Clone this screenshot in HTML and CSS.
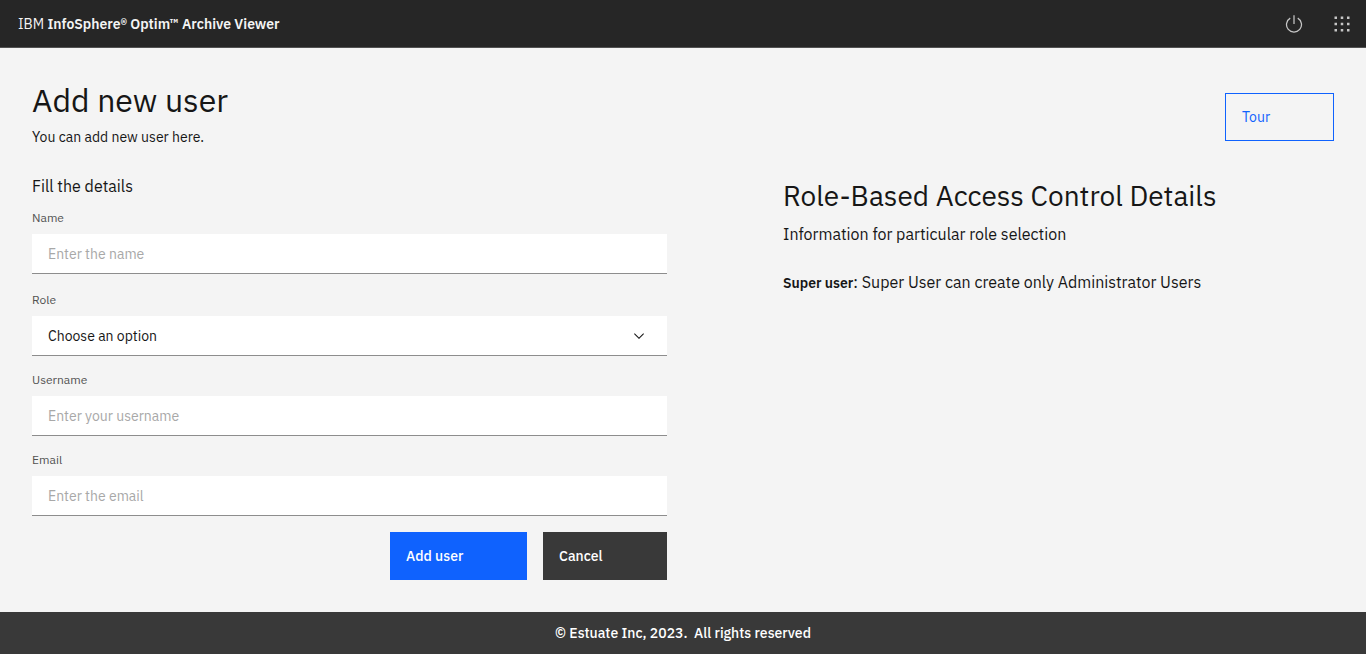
FILE: index.html
```html
<!DOCTYPE html>
<html lang="en">
<head>
<meta charset="utf-8">
<meta name="viewport" content="width=device-width, initial-scale=1">
<title>Add new user</title>
<link rel="stylesheet" href="styles.css">
</head>
<body>
<header class="header">
  <a class="brand" href="#">IBM <span class="brand-name">InfoSphere® Optim™ Archive Viewer</span></a>
  <div class="header-actions">
    <button class="icon-button" type="button" aria-label="Log out">
      <svg width="20" height="20" viewBox="0 0 32 32" fill="currentColor" aria-hidden="true"><path d="M22.5 5.74l-1 1.73a11 11 0 1 1-11 0l-1-1.73a13 13 0 1 0 13 0z"/><path d="M15 2h2v14h-2z"/></svg>
    </button>
    <button class="icon-button" type="button" aria-label="App switcher">
      <svg width="20" height="20" viewBox="0 0 20 20" fill="currentColor" aria-hidden="true"><path d="M2.500 2.500h2.500v2.500h-2.500zM8.750 2.500h2.500v2.500h-2.500zM15 2.500h2.500v2.500h-2.500zM2.500 8.750h2.500v2.500h-2.500zM8.750 8.750h2.500v2.500h-2.500zM15 8.750h2.500v2.500h-2.500zM2.500 15h2.500v2.500h-2.500zM8.750 15h2.500v2.500h-2.500zM15 15h2.500v2.500h-2.500z"/></svg>
    </button>
  </div>
</header>
<main class="main">
  <div class="page-head">
    <div>
      <h1 class="title">Add new user</h1>
      <p class="subtitle">You can add new user here.</p>
    </div>
    <button class="button button-outline" type="button">Tour</button>
  </div>
  <div class="columns">
    <form class="form">
      <h2 class="form-title">Fill the details</h2>
      <div class="field field-first">
        <label class="label" for="name">Name</label>
        <input class="control" id="name" type="text" placeholder="Enter the name">
      </div>
      <div class="field">
        <label class="label" for="role">Role</label>
        <div class="select-wrap">
          <select class="control" id="role"><option>Choose an option</option><option>Administrator</option></select>
          <svg class="chevron" width="16" height="16" viewBox="0 0 16 16" fill="currentColor" aria-hidden="true"><path d="M8 11L3 6l.7-.7L8 9.600l4.300-4.300.7.7z"/></svg>
        </div>
      </div>
      <div class="field">
        <label class="label" for="username">Username</label>
        <input class="control" id="username" type="text" placeholder="Enter your username">
      </div>
      <div class="field">
        <label class="label" for="email">Email</label>
        <input class="control" id="email" type="email" placeholder="Enter the email">
      </div>
      <div class="actions">
        <button class="button button-primary" type="submit">Add user</button>
        <button class="button button-secondary" type="button">Cancel</button>
      </div>
    </form>
    <section class="info">
      <h2 class="info-title">Role-Based Access Control Details</h2>
      <p class="info-text">Information for particular role selection</p>
      <p class="info-text"><strong class="role-name">Super user</strong>: Super User can create only Administrator Users</p>
    </section>
  </div>
</main>
<footer class="footer">© Estuate Inc, 2023.&nbsp; All rights reserved</footer>
</body>
</html>
```
FILE: styles.css
```css
* {
  box-sizing: border-box;
}

body {
  display: flex;
  flex-direction: column;
  min-height: 100vh;
  margin: 0;
  background: #f4f4f4;
  color: #161616;
  font-family: "IBM Plex Sans", Roboto, "Liberation Sans", sans-serif;
  font-size: 14px;
  line-height: 20px;
}

h1,
h2,
p {
  margin: 0;
}

button,
input,
select {
  font: inherit;
}

.header {
  display: flex;
  align-items: center;
  justify-content: space-between;
  height: 48px;
  padding-left: 18px;
  background: #262626;
  border-bottom: 1px solid #525252;
}

.brand {
  color: #f4f4f4;
  text-decoration: none;
}

.brand-name {
  font-weight: 600;
}

.header-actions {
  display: flex;
}

.icon-button {
  display: flex;
  align-items: center;
  justify-content: center;
  width: 48px;
  height: 48px;
  padding: 0;
  border: 0;
  background: transparent;
  color: #c6c6c6;
}

.main {
  flex: 1;
  padding: 32px;
}

.page-head {
  display: flex;
  justify-content: space-between;
  align-items: flex-start;
}

.title {
  padding-bottom: 7px;
  font-size: 32px;
  font-weight: 400;
  line-height: 40px;
}

.subtitle {
  font-size: 14px;
}

.columns {
  display: grid;
  grid-template-columns: 1fr 1fr;
  gap: 32px;
  padding-top: 27px;
}

.form {
  display: grid;
  gap: 16px;
}

.form-title {
  font-size: 16px;
  font-weight: 400;
  line-height: 24px;
  margin-bottom: -4px;
}

.field {
  display: grid;
  gap: 8px;
}

.field-first {
  padding-bottom: 2px;
}

.label {
  color: #525252;
  font-size: 12px;
  line-height: 16px;
}

.control {
  display: block;
  width: 100%;
  height: 40px;
  padding: 0 16px;
  appearance: none;
  border: 0;
  border-bottom: 1px solid #8d8d8d;
  border-radius: 0;
  background: #fff;
  color: #161616;
}

.control::placeholder {
  color: #a8a8a8;
}

.select-wrap {
  position: relative;
}

.chevron {
  position: absolute;
  top: 12px;
  right: 20px;
  pointer-events: none;
}

.actions {
  display: flex;
  justify-content: flex-end;
  gap: 16px;
}

.button {
  height: 48px;
  padding: 0 16px;
  border: 0;
  text-align: left;
}

.button-primary {
  min-width: 137px;
  background: #0f62fe;
  color: #fff;
  font-weight: 500;
}

.button-secondary {
  min-width: 124px;
  background: #393939;
  color: #fff;
  font-weight: 500;
}

.button-outline {
  min-width: 109px;
  margin-top: 13px;
  border: 1px solid #0f62fe;
  background: transparent;
  color: #0f62fe;
}

.info {
  padding: 4px 0 0 84px;
}

.info-title {
  font-size: 28px;
  font-weight: 400;
  line-height: 36px;
  margin-bottom: 8px;
}

.info-text {
  font-size: 16px;
  line-height: 24px;
  margin-bottom: 24px;
}

.role-name {
  font-size: 14px;
  font-weight: 600;
}

.footer {
  padding: 11px 16px;
  background: #393939;
  color: #fff;
  font-weight: 500;
  text-align: center;
}
```
